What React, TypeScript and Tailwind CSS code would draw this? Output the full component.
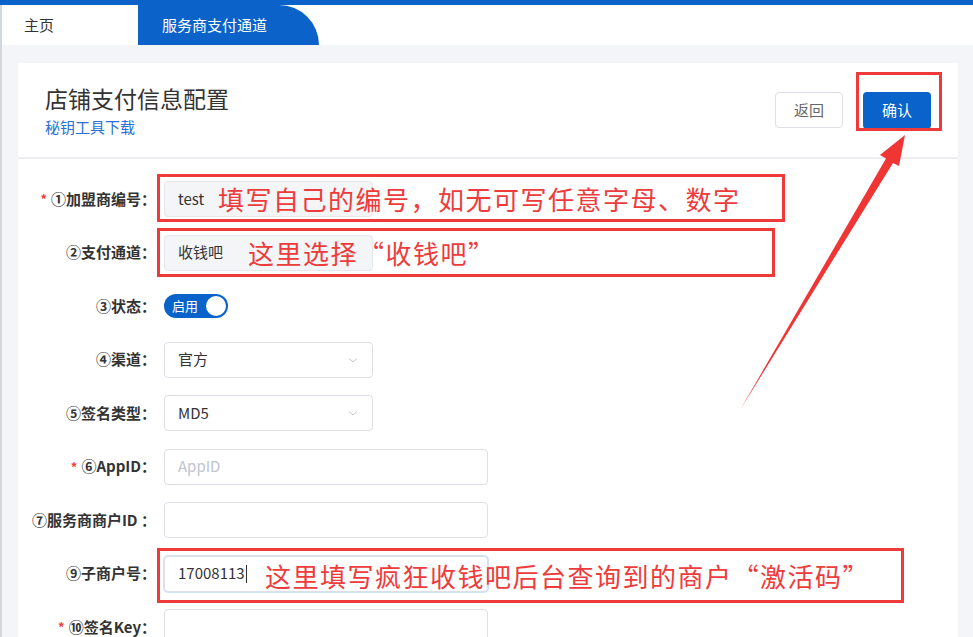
import React from 'react';

const CJK = '"Noto Sans CJK SC", "Noto Sans", sans-serif';

function Chevron() {
  return (
    <svg width="12" height="12" viewBox="0 0 12 12" className="text-[#c0c4cc]">
      <path d="M2 4.5 L6 8 L10 4.5" fill="none" stroke="currentColor" strokeWidth="1" />
    </svg>
  );
}

function Row({ label, required, children }: { label: React.ReactNode; required?: boolean; children: React.ReactNode }) {
  return (
    <div className="flex items-center h-[36px]">
      <div className="w-[140px] flex justify-end items-center pr-[2px] text-[15px] font-bold text-[#333] whitespace-nowrap">
        {required && <span className="text-[#f03c3c] mr-[4px] text-[13px]">*</span>}
        <span>{label}</span>
      </div>
      <div className="ml-[6px] flex items-center">{children}</div>
    </div>
  );
}

function Box({ w, children, gray, focus }: { w: string; children?: React.ReactNode; gray?: boolean; focus?: boolean }) {
  return (
    <div
      className={
        w +
        ' h-[36px] rounded-[4px] border flex items-center justify-between px-[13px] text-[15px] text-[#333] ' +
        (gray ? 'bg-[#f4f5f7] border-[#e4e7ed] ' : 'bg-white border-[#dcdfe6] ') +
        (focus ? 'border-[#4a90e2] shadow-[0_0_0_1px_rgba(74,144,226,0.25)]' : '')
      }
    >
      {children}
    </div>
  );
}

export default function App() {
  return (
    <div className="relative w-[973px] h-[637px] overflow-hidden bg-[#f3f5f9]" style={{ fontFamily: CJK }}>
      <div className="h-[5px] bg-[#0b63c9]" />
      <div className="border-l-2 border-[#d3d7de]">
        {/* tabs */}
        <div className="h-[40px] bg-white flex items-stretch">
          <div className="w-[136px] flex items-center pl-[22px] text-[15px] text-[#333]">主页</div>
          <div className="w-[181px] bg-[#0b63c9] rounded-tr-[40px] flex items-center pl-[24px] text-[15px] text-white">
            服务商支付通道
          </div>
        </div>

        <div className="pl-[16px] pr-[15px] pt-[18px]">
          {/* header card */}
          <div className="h-[94px] bg-white flex items-center justify-between pl-[27px] pr-[27px]">
            <div className="flex flex-col">
              <div className="text-[23px] text-[#333] leading-[30px]">店铺支付信息配置</div>
              <div className="text-[15px] text-[#2a70d6] leading-[20px] mt-[4px]">秘钥工具下载</div>
            </div>
            <div className="flex items-center gap-[20px]">
              <div className="w-[68px] h-[36px] border border-[#dcdfe6] rounded-[4px] flex items-center justify-center text-[15px] text-[#666] bg-white">
                返回
              </div>
              <div className="w-[68px] h-[37px] bg-[#0a62cb] rounded-[4px] flex items-center justify-center text-[15px] text-white">
                确认
              </div>
            </div>
          </div>
          <div className="h-[2px] bg-[#eceef2]" />

          {/* form card */}
          <div className="bg-white h-[500px] pt-[22px] flex flex-col gap-[17.5px]">
            <Row label="①加盟商编号：" required>
              <Box w="w-[209px]" gray>
                <span>test</span>
              </Box>
            </Row>
            <Row label="②支付通道：">
              <Box w="w-[209px]" gray>
                <span>收钱吧</span>
                <Chevron />
              </Box>
            </Row>
            <Row label="③状态：">
              <div className="w-[64px] h-[24px] rounded-full bg-[#0a62cb] flex items-center justify-between pl-[8px] pr-[2px]">
                <span className="text-[13px] text-white">启用</span>
                <span className="w-[20px] h-[20px] rounded-full bg-white" />
              </div>
            </Row>
            <Row label="④渠道：">
              <Box w="w-[209px]">
                <span>官方</span>
                <Chevron />
              </Box>
            </Row>
            <Row label="⑤签名类型：">
              <Box w="w-[209px]">
                <span>MD5</span>
                <Chevron />
              </Box>
            </Row>
            <Row label="⑥AppID：" required>
              <Box w="w-[324px]">
                <span className="text-[#c0c4cc]">AppID</span>
              </Box>
            </Row>
            <Row label="⑦服务商商户ID ：">
              <Box w="w-[324px]" />
            </Row>
            <Row label="⑨子商户号：">
              <Box w="w-[324px]" focus>
                <span className="flex items-center">
                  17008113<span className="w-px h-[18px] bg-[#333] ml-px" />
                </span>
              </Box>
            </Row>
            <Row label="⑩签名Key：" required>
              <Box w="w-[324px]" />
            </Row>
          </div>
        </div>
      </div>

      {/* annotations */}
      <div className="absolute left-[157px] top-[174px] w-[628px] h-[48px] border-[3px] border-[#ef3a3a]" />
      <div className="absolute left-[218px] top-[181px] text-[26px] tracking-[1.5px] leading-[36px] text-[#ee3b3b] whitespace-nowrap">
        填写自己的编号，如无可写任意字母、数字
      </div>
      <div className="absolute left-[157px] top-[228px] w-[618px] h-[49px] border-[3px] border-[#ef3a3a]" />
      <div className="absolute left-[248px] top-[235px] text-[26px] tracking-[1.5px] leading-[36px] text-[#ee3b3b] whitespace-nowrap">
        这里选择“收钱吧”
      </div>
      <div className="absolute left-[856px] top-[72px] w-[86px] h-[59px] border-[3px] border-[#ef3a3a]" />
      <div className="absolute left-[157px] top-[548px] w-[747px] h-[55px] border-[3px] border-[#ef3a3a]" />
      <div className="absolute left-[265px] top-[558px] text-[26px] tracking-[1.5px] leading-[36px] text-[#ee3b3b] whitespace-nowrap">
        这里填写疯狂收钱吧后台查询到的商户“激活码”
      </div>
      <svg className="absolute inset-0 pointer-events-none" width="973" height="637">
        <polygon points="740,410 886,158.6 880,155 905,135 899,166 893,163" fill="#f03535" />
      </svg>
    </div>
  );
}
